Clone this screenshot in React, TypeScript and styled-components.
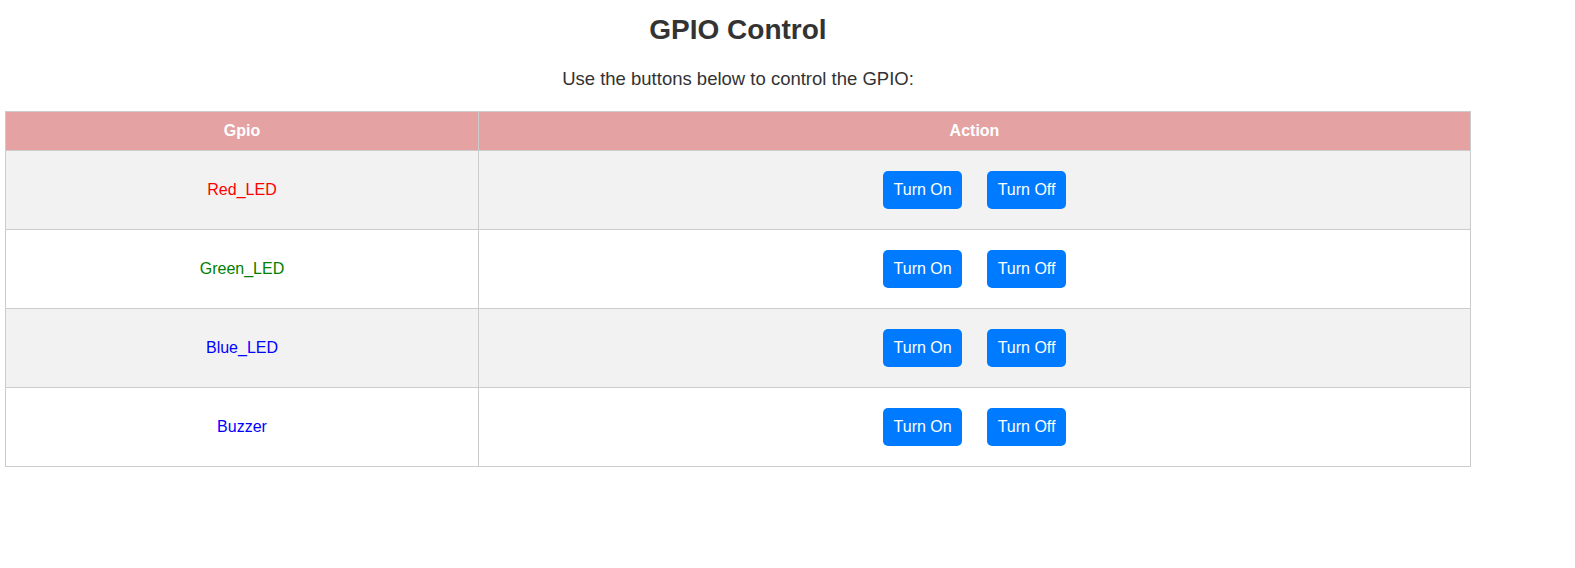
import styled, { createGlobalStyle } from 'styled-components';

type Gpio = {
  name: string;
  color: string;
};

const gpios: Gpio[] = [
  { name: 'Red_LED', color: 'red' },
  { name: 'Green_LED', color: 'green' },
  { name: 'Blue_LED', color: 'blue' },
  { name: 'Buzzer', color: 'blue' },
];

const GlobalStyle = createGlobalStyle`
  body {
    margin: 0;
    background: #fff;
    font-family: 'Liberation Sans', Arial, sans-serif;
    color: #333;
  }
`;

export default function App() {
  return (
    <>
      <GlobalStyle />
      <Page>
        <Title>GPIO Control</Title>
        <Intro>Use the buttons below to control the GPIO:</Intro>
        <Table>
          <thead>
            <tr>
              <HeadCell $width={452}>Gpio</HeadCell>
              <HeadCell>Action</HeadCell>
            </tr>
          </thead>
          <tbody>
            {gpios.map((g) => (
              <Row key={g.name}>
                <Cell>
                  <GpioName $color={g.color}>{g.name}</GpioName>
                </Cell>
                <Cell>
                  <Actions>
                    <ActionButton>Turn On</ActionButton>
                    <ActionButton>Turn Off</ActionButton>
                  </Actions>
                </Cell>
              </Row>
            ))}
          </tbody>
        </Table>
      </Page>
    </>
  );
}

const Page = styled.div`
  width: 1466px;
  margin-left: 5px;
  text-align: center;
`;

const Title = styled.h1`
  margin: 14px 0 0;
  font-size: 28px;
  font-weight: 700;
  color: #333;
`;

const Intro = styled.p`
  margin: 22px 0 21px;
  font-size: 18.5px;
  color: #333;
`;

const Table = styled.table`
  width: 100%;
  border-collapse: collapse;
`;

const HeadCell = styled.th<{ $width?: number }>`
  ${(p) => (p.$width ? `width: ${p.$width}px;` : '')}
  background-color: #e4a2a2;
  color: #fff;
  font-size: 16px;
  font-weight: 700;
  padding: 10px;
  border: 1px solid #ccc;
  line-height: 18px;
`;

const Row = styled.tr`
  background-color: #fff;

  &:nth-child(odd) {
    background-color: #f2f2f2;
  }
`;

const Cell = styled.td`
  padding: 20px 10px;
  border: 1px solid #ccc;
  font-size: 16px;
  text-align: center;
`;

const GpioName = styled.span<{ $color: string }>`
  color: ${(p) => p.$color};
`;

const Actions = styled.div`
  display: flex;
  justify-content: center;
  gap: 25px;
`;

const ActionButton = styled.button`
  font-family: 'Liberation Sans', Arial, sans-serif;
  font-size: 16px;
  line-height: 18px;
  color: #fff;
  background-color: #007bff;
  border: none;
  border-radius: 5px;
  padding: 10px 10.5px;
  cursor: pointer;
`;
